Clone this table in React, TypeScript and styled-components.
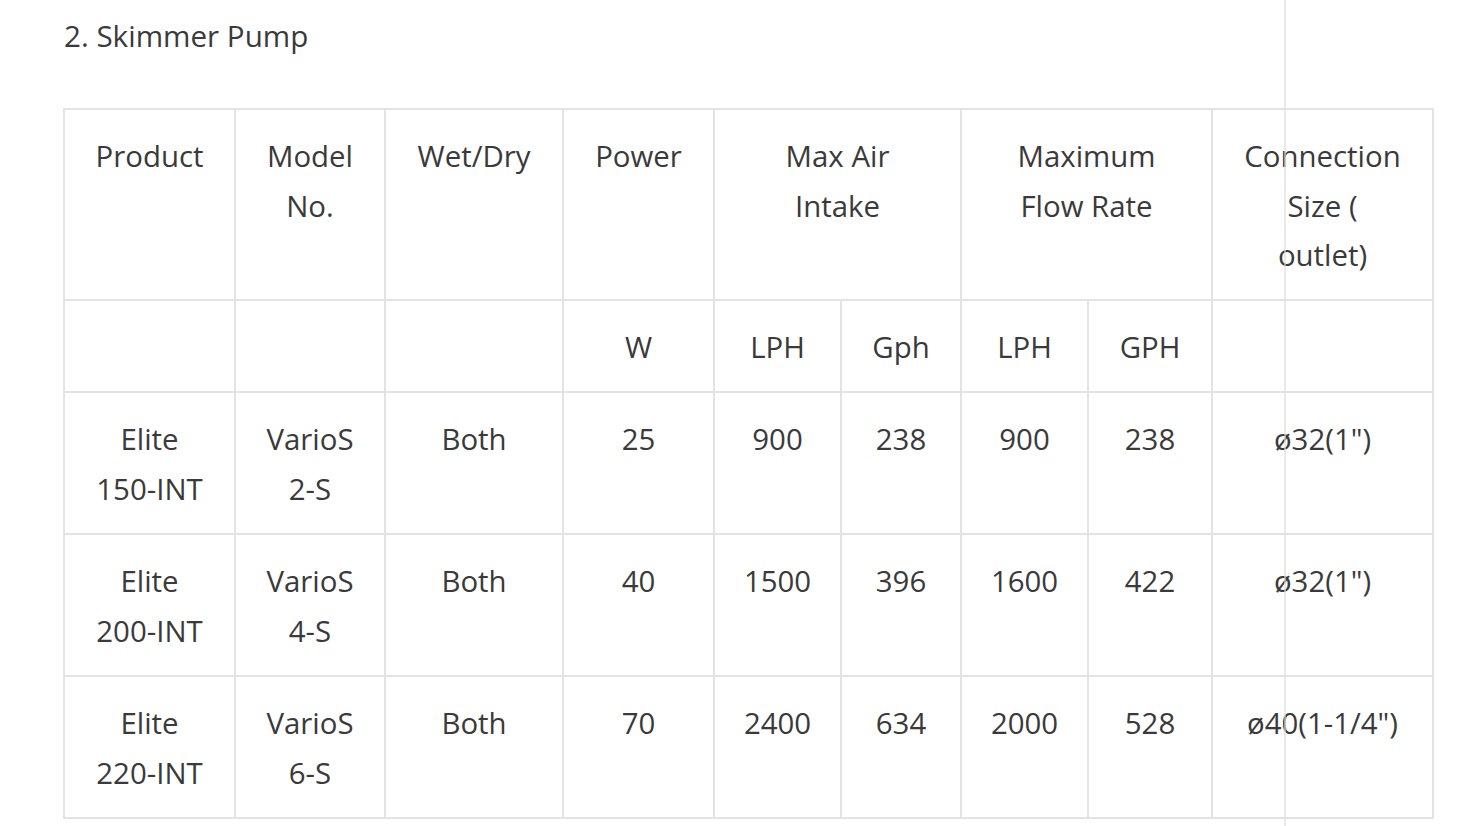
import styled, { createGlobalStyle } from "styled-components"

const GlobalStyle = createGlobalStyle`
  html, body {
    margin: 0;
    padding: 0;
    background: #ffffff;
  }
  body {
    font-family: "Open Sans", "Noto Sans", sans-serif;
    color: #3a3a3a;
  }
`

const columns = [171, 150, 178, 151, 127, 120, 127, 124, 221]

const rows = [
  ["Elite\n150-INT", "VarioS\n2-S", "Both", "25", "900", "238", "900", "238", "ø32(1\")"],
  ["Elite\n200-INT", "VarioS\n4-S", "Both", "40", "1500", "396", "1600", "422", "ø32(1\")"],
  ["Elite\n220-INT", "VarioS\n6-S", "Both", "70", "2400", "634", "2000", "528", "ø40(1-1/4\")"],
]

const units = ["", "", "", "W", "LPH", "Gph", "LPH", "GPH", ""]

export default function App() {
  return (
    <Page>
      <GlobalStyle />
      <Title>2. Skimmer Pump</Title>
      <Table>
        <colgroup>
          {columns.map((w, i) => (
            <col key={i} style={{ width: w }} />
          ))}
        </colgroup>
        <tbody>
          <tr>
            <Cell>Product</Cell>
            <Cell>
              Model
              <br />
              No.
            </Cell>
            <Cell>Wet/Dry</Cell>
            <Cell>Power</Cell>
            <Cell colSpan={2}>
              Max Air
              <br />
              Intake
            </Cell>
            <Cell colSpan={2}>
              Maximum
              <br />
              Flow Rate
            </Cell>
            <Cell>
              Connection
              <br />
              Size (
              <br />
              outlet)
            </Cell>
          </tr>
          <tr>
            {units.map((u, i) => (
              <Cell key={i}>{u}</Cell>
            ))}
          </tr>
          {rows.map((row, r) => (
            <tr key={r}>
              {row.map((v, i) => (
                <Cell key={i} $data>
                  {v}
                </Cell>
              ))}
            </tr>
          ))}
        </tbody>
      </Table>
      <Guide />
    </Page>
  )
}

const Page = styled.div`
  position: relative;
  min-height: 826px;
  padding: 11px 0 0 64px;
  box-sizing: border-box;
  overflow: hidden;
`

const Title = styled.h3`
  margin: 0 0 47px 0;
  font-size: 29.6px;
  font-weight: 400;
  line-height: 50px;
  color: #3a3a3a;
`

const Table = styled.table`
  border-collapse: collapse;
  table-layout: fixed;
  width: 1371px;
  margin-left: -1px;
`

const Cell = styled.td<{ $data?: boolean }>`
  border: 2px solid #e3e3e3;
  padding: 22px 8px ${(p) => (p.$data ? "19px" : "18.5px")};
  text-align: center;
  vertical-align: top;
  font-size: 29.4px;
  line-height: 49.5px;
  color: #3a3a3a;
  white-space: pre-line;
  height: ${(p) => (p.$data ? "99px" : "49.5px")};
`

const Guide = styled.div`
  position: absolute;
  top: 0;
  bottom: 0;
  left: 1284px;
  width: 2px;
  background: rgba(220, 220, 220, 0.6);
  pointer-events: none;
`
